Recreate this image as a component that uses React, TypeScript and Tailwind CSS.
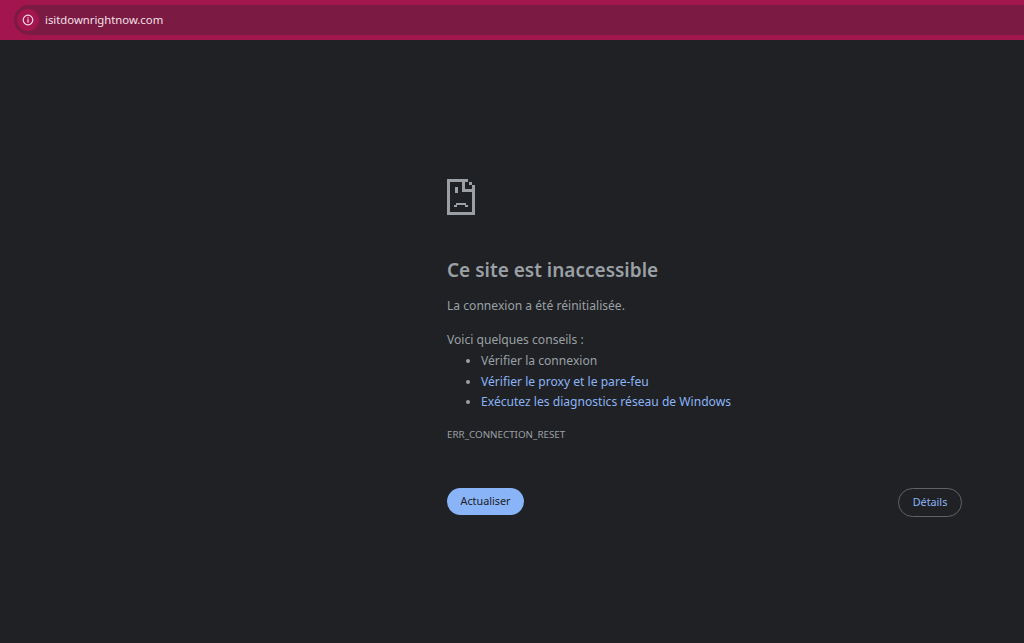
import React from "react";

function SadPage() {
  return (
    <svg width="28" height="36" viewBox="0 0 28 36" fill="#9aa0a6" shapeRendering="crispEdges">
      <rect x="0" y="0" width="21" height="3" />
      <rect x="0" y="0" width="3" height="36" />
      <rect x="0" y="33" width="28" height="3" />
      <rect x="25" y="6" width="3" height="30" />
      <rect x="15" y="0" width="3" height="13" />
      <rect x="15" y="10" width="13" height="3" />
      <rect x="22" y="3" width="3" height="3" />
      <rect x="8" y="8" width="3" height="6" />
      <rect x="9" y="24" width="10" height="2" />
      <rect x="7" y="26" width="3" height="2" />
      <rect x="18" y="26" width="3" height="2" />
    </svg>
  );
}

export default function App() {
  return (
    <div className="h-[643px] w-[1024px] overflow-hidden bg-[#202124] font-['Noto_Sans','Open_Sans',sans-serif]">
      <div className="flex h-10 items-center bg-[#a3154f] pl-[14px]">
        <div className="flex h-[30px] w-full items-center rounded-l-full bg-[#7b1a43] pl-[3px]">
          <div className="flex h-[22px] w-[22px] items-center justify-center rounded-full bg-[#a3154f]">
            <svg width="12" height="12" viewBox="0 0 12 12" fill="none">
              <circle cx="6" cy="6" r="4.8" stroke="#f3dbe5" strokeWidth="1.2" />
              <rect x="5.4" y="5.2" width="1.2" height="3.4" fill="#f3dbe5" />
              <rect x="5.4" y="3.2" width="1.2" height="1.2" fill="#f3dbe5" />
            </svg>
          </div>
          <span className="ml-[6px] text-[11.3px] text-[#f1e0e7]">isitdownrightnow.com</span>
        </div>
      </div>

      <main className="pl-[447px] pr-[62px] pt-[139px]">
        <SadPage />
        <h1 className="mt-[43px] text-[19px] leading-6 font-semibold text-[#9aa0a6]">Ce site est inaccessible</h1>
        <p className="mt-[14px] text-[12.1px] leading-5 text-[#9aa0a6]">La connexion a été réinitialisée.</p>
        <p className="mt-[14px] text-[12.1px] leading-5 text-[#9aa0a6]">Voici quelques conseils :</p>
        <ul className="mt-[1px] list-disc pl-[34px] text-[12.1px] leading-[20.5px] text-[#9aa0a6] marker:text-[#9aa0a6]">
          <li>Vérifier la connexion</li>
          <li className="text-[#8ab4f8] marker:text-[#9aa0a6]">Vérifier le proxy et le pare-feu</li>
          <li className="text-[#8ab4f8] marker:text-[#9aa0a6]">Exécutez les diagnostics réseau de Windows</li>
        </ul>
        <p className="mt-[14px] text-[9.8px] leading-4 text-[#9aa0a6]">ERR_CONNECTION_RESET</p>
        <div className="mt-[45px] flex items-start justify-between">
          <button className="h-[27px] w-[77px] rounded-full bg-[#8ab4f8] text-[10.8px] text-[#202124]">Actualiser</button>
          <button className="h-[29px] w-[64px] rounded-full border border-[#5f6368] text-[10.8px] text-[#8ab4f8]">Détails</button>
        </div>
      </main>
    </div>
  );
}
